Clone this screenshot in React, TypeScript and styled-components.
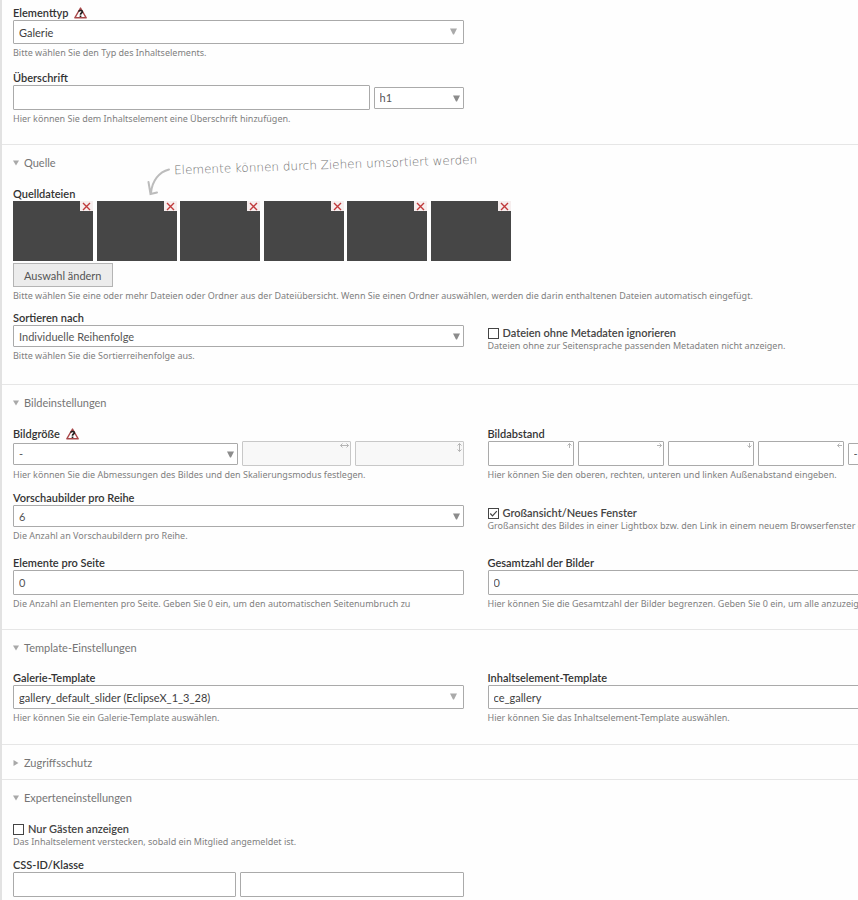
import React, { useId } from "react";
import styled, { createGlobalStyle } from "styled-components";

const GlobalStyle = createGlobalStyle`
  * { box-sizing: border-box; }
  body {
    margin: 0;
    background: #fefefe;
    color: #3d3d3d;
    font-family: Lato, "Noto Sans", sans-serif;
    font-size: 11px;
  }
  input, select, button { font: inherit; color: inherit; margin: 0; }
`;

const Page = styled.main`
  min-height: 100vh;
  border-left: 2px solid #e2e2e2;
  overflow: hidden;
`;

const Form = styled.form`
  min-width: 936px;
  padding-top: 7px;
`;

const Panel = styled.fieldset<{ $first?: boolean; $closed?: boolean }>`
  margin: 0;
  min-width: 0;
  border: 0;
  border-top: ${(p) => (p.$first ? "0" : "1px solid #e6e6e6")};
  padding: 0 0 ${(p) => (p.$closed ? 8 : 7)}px 11px;
`;

const PanelHeader = styled.button`
  display: flex;
  align-items: center;
  gap: 5px;
  margin-top: 10px;
  padding: 0;
  border: 0;
  background: none;
  color: #757575;
  line-height: 16px;
`;

const PanelBody = styled.div<{ $compact?: boolean }>`
  padding-top: ${(p) => (p.$compact ? 16 : 17)}px;
`;

const Row = styled.div<{ $height?: number }>`
  display: grid;
  grid-template-columns: 1fr 1fr;
  column-gap: 24px;
  min-height: ${(p) => p.$height ?? 65}px;
  align-items: start;
`;

const WideRow = styled.div`
  padding-bottom: 10px;
`;

const Field = styled.div`
  min-width: 0;
`;

const CheckField = styled.div<{ $flush?: boolean }>`
  padding-top: ${(p) => (p.$flush ? 0 : 14)}px;
`;

const Label = styled.label`
  display: flex;
  align-items: center;
  gap: 6px;
  height: 13px;
  padding-bottom: 1px;
  line-height: 12px;
  font-weight: 600;
  color: #333;
`;

const Help = styled.p<{ $tight?: boolean }>`
  margin: ${(p) => (p.$tight ? 0 : 3)}px 0 0;
  font-family: "Noto Sans", "Open Sans", sans-serif;
  font-size: 9px;
  line-height: 12px;
  color: #808080;
  white-space: nowrap;
`;

const Line = styled.div<{ $columns: string }>`
  display: grid;
  grid-template-columns: ${(p) => p.$columns};
  column-gap: 4px;
  align-items: center;
`;

const TextBox = styled.input`
  display: block;
  width: 100%;
  min-width: 0;
  height: 25px;
  padding: 0 5px;
  border: 1px solid #aaa;
  border-radius: 1px;
  background: #fff;
  color: #555;
  &:disabled { background: #f8f8f8; border-color: #c8c8c8; }
`;

const SelectWrap = styled.div<{ $tall?: boolean }>`
  position: relative;
  select {
    display: block;
    appearance: none;
    width: 100%;
    height: ${(p) => (p.$tall ? 24 : 22)}px;
    padding: 0 16px 0 5px;
    border: 1px solid #aaa;
    border-radius: 1px;
    background: #fff;
    color: ${(p) => (p.$tall ? "#3d3d3d" : "#555")};
  }
  svg {
    position: absolute;
    right: ${(p) => (p.$tall ? 7 : 4)}px;
    top: 8px;
    pointer-events: none;
    color: ${(p) => (p.$tall ? "#aaa" : "#8c8c8c")};
  }
`;

const BoxWrap = styled.div`
  position: relative;
  svg {
    position: absolute;
    top: 2px;
    right: 2px;
    color: #b5b5b5;
    pointer-events: none;
  }
`;

const CheckLabel = styled.label`
  display: flex;
  align-items: center;
  gap: 4px;
  line-height: 14px;
  font-weight: 600;
  color: #444;
`;

const CheckBox = styled.span`
  position: relative;
  display: flex;
  input {
    appearance: none;
    width: 11px;
    height: 11px;
    border: 1px solid #444;
    background: #fff;
  }
  svg { position: absolute; inset: 0; pointer-events: none; }
`;

const Thumbs = styled.ul`
  display: grid;
  grid-template-columns: repeat(6, 80px);
  justify-content: space-between;
  width: 498px;
  margin: 0;
  padding: 0;
  list-style: none;
`;

const Thumb = styled.li`
  display: flex;
  justify-content: flex-end;
  align-items: flex-start;
  height: 60px;
  background: #464646;
`;

const RemoveButton = styled.button`
  display: flex;
  justify-content: center;
  align-items: flex-end;
  width: 13px;
  height: 10px;
  padding: 0;
  border: 0;
  background: #f6eeee;
`;

const ChangeButton = styled.button`
  display: block;
  height: 24px;
  margin-top: 2px;
  padding: 0 10px;
  border: 1px solid #b4b4b4;
  background: #ececec;
  color: #555;
`;

const SourceArea = styled.div`
  position: relative;
`;

const Hint = styled.div`
  position: absolute;
  left: 134px;
  top: -38px;
  display: flex;
  align-items: flex-start;
  gap: 2px;
  color: #707070;
`;

const HintArrow = styled.svg`
  margin-top: 18px;
`;

const HintText = styled.span`
  margin-top: 7px;
  font-family: "DejaVu Sans", sans-serif;
  font-weight: 200;
  font-size: 12px;
  line-height: 16px;
  white-space: nowrap;
  transform: rotate(-2deg);
`;

const Triangle = ({ right }: { right?: boolean }) => (
  <svg width="6" height="6" viewBox="0 0 6 6" fill="#a8a8a8" aria-hidden="true">
    <path d={right ? "M0.5 0L5.5 3L0.5 6Z" : "M0 0.5H6L3 5.5Z"} />
  </svg>
);

const WarnIcon = () => (
  <svg width="13" height="12" viewBox="0 0 13 12" fill="none" aria-hidden="true">
    <path d="M6.5 1L12.2 10.8H0.8Z" fill="#fff" stroke="#a8484a" strokeWidth="1.4" strokeLinejoin="round" />
    <path d="M4.7 4.7C5 3 8.6 3.1 8.3 5C8.1 6.2 6.5 6 6.5 7.7M6.5 8.5V10" stroke="#222" strokeWidth="1.7" />
  </svg>
);

const arrows = {
  h: { w: 9, h: 5, d: "M0.5 2.5H8.5M2.5 0.5L0.5 2.5L2.5 4.5M6.5 0.5L8.5 2.5L6.5 4.5" },
  v: { w: 5, h: 9, d: "M2.5 0.5V8.5M0.5 2.5L2.5 0.5L4.5 2.5M0.5 6.5L2.5 8.5L4.5 6.5" },
  up: { w: 5, h: 5, d: "M2.5 0.5V5M0.5 2.5L2.5 0.5L4.5 2.5" },
  right: { w: 5, h: 5, d: "M0 2.5H4.5M2.5 0.5L4.5 2.5L2.5 4.5" },
  down: { w: 5, h: 5, d: "M2.5 0V4.5M0.5 2.5L2.5 4.5L4.5 2.5" },
  left: { w: 5, h: 5, d: "M5 2.5H0.5M2.5 0.5L0.5 2.5L2.5 4.5" },
};

type ArrowKind = keyof typeof arrows;

const ArrowBox = ({ kind, name, id, disabled }: { kind: ArrowKind; name: string; id?: string; disabled?: boolean }) => {
  const a = arrows[kind];
  return (
    <BoxWrap>
      <TextBox id={id} aria-label={name} disabled={disabled} />
      <svg width={a.w} height={a.h} viewBox={`0 0 ${a.w} ${a.h}`} fill="none" stroke="currentColor" aria-hidden="true">
        <path d={a.d} />
      </svg>
    </BoxWrap>
  );
};

const Select = ({ id, value, tall, name }: { id?: string; value: string; tall?: boolean; name?: string }) => (
  <SelectWrap $tall={tall}>
    <select id={id} aria-label={name}>
      <option>{value}</option>
    </select>
    <svg width="7" height="7" viewBox="0 0 7 7" fill="currentColor" aria-hidden="true">
      <path d="M0 0.5H7L4 6.5H3Z" />
    </svg>
  </SelectWrap>
);

type FieldProps = {
  label: string;
  help: string;
  warn?: boolean;
  children: (id: string) => React.ReactNode;
};

const LabeledField = ({ label, help, warn, children }: FieldProps) => {
  const id = useId();
  return (
    <Field>
      <Label htmlFor={id}>
        {label}
        {warn && <WarnIcon />}
      </Label>
      {children(id)}
      <Help>{help}</Help>
    </Field>
  );
};

const Check = ({ label, help, checked, flush }: { label: string; help: string; checked?: boolean; flush?: boolean }) => (
  <CheckField $flush={flush}>
    <CheckLabel>
      <CheckBox>
        <input type="checkbox" defaultChecked={checked} />
        {checked && (
          <svg width="11" height="11" viewBox="0 0 11 11" fill="none" stroke="#444" strokeWidth="1.2" aria-hidden="true">
            <path d="M2.3 5.5L4.5 7.8L8.8 3.2" />
          </svg>
        )}
      </CheckBox>
      {label}
    </CheckLabel>
    <Help $tight>{help}</Help>
  </CheckField>
);

const Section = ({ title, compact, children }: { title: string; compact?: boolean; children?: React.ReactNode }) => (
  <Panel $closed={!children}>
    <PanelHeader type="button" aria-expanded={Boolean(children)}>
      <Triangle right={!children} />
      {title}
    </PanelHeader>
    {children && <PanelBody $compact={compact}>{children}</PanelBody>}
  </Panel>
);

const files = ["1", "2", "3", "4", "5", "6"];

export default function App() {
  return (
    <Page>
      <GlobalStyle />
      <Form>
        <Panel $first>
          <Row>
            <LabeledField label="Elementtyp" warn help="Bitte wählen Sie den Typ des Inhaltselements.">
              {(id) => <Select id={id} value="Galerie" tall />}
            </LabeledField>
          </Row>
          <Row>
            <LabeledField label="Überschrift" help="Hier können Sie dem Inhaltselement eine Überschrift hinzufügen.">
              {(id) => (
                <Line $columns="1fr 90px">
                  <TextBox id={id} />
                  <Select name="Ebene" value="h1" />
                </Line>
              )}
            </LabeledField>
          </Row>
        </Panel>

        <Section title="Quelle">
          <WideRow>
            <SourceArea>
              <Hint>
                <HintArrow width="25" height="28" viewBox="0 0 25 28" fill="none" stroke="#bcbcbc" strokeWidth="2" strokeLinecap="round" aria-hidden="true">
                  <path d="M22 1.500C12 4 5 13 4 25M1.500 14L3.500 26L10 24.500" />
                </HintArrow>
                <HintText>Elemente können durch Ziehen umsortiert werden</HintText>
              </Hint>
              <Label as="div">Quelldateien</Label>
              <Thumbs>
                {files.map((file) => (
                  <Thumb key={file}>
                    <RemoveButton type="button" aria-label="Entfernen">
                      <svg width="9" height="9" viewBox="0 0 9 9" fill="none" stroke="#c0393b" strokeWidth="1.4" aria-hidden="true">
                        <path d="M1 1L8 8M8 1L1 8" />
                      </svg>
                    </RemoveButton>
                  </Thumb>
                ))}
              </Thumbs>
            </SourceArea>
            <ChangeButton type="button">Auswahl ändern</ChangeButton>
            <Help>
              Bitte wählen Sie eine oder mehr Dateien oder Ordner aus der Dateiübersicht. Wenn Sie einen Ordner auswählen,
              werden die darin enthaltenen Dateien automatisch eingefügt.
            </Help>
          </WideRow>
          <Row>
            <LabeledField label="Sortieren nach" help="Bitte wählen Sie die Sortierreihenfolge aus.">
              {(id) => <Select id={id} value="Individuelle Reihenfolge" />}
            </LabeledField>
            <Check
              label="Dateien ohne Metadaten ignorieren"
              help="Dateien ohne zur Seitensprache passenden Metadaten nicht anzeigen."
            />
          </Row>
        </Section>

        <Section title="Bildeinstellungen">
          <Row $height={64}>
            <LabeledField
              label="Bildgröße"
              warn
              help="Hier können Sie die Abmessungen des Bildes und den Skalierungsmodus festlegen."
            >
              {(id) => (
                <Line $columns="2fr 109px 109px">
                  <Select id={id} value="-" />
                  <ArrowBox kind="h" name="Breite" disabled />
                  <ArrowBox kind="v" name="Höhe" disabled />
                </Line>
              )}
            </LabeledField>
            <LabeledField
              label="Bildabstand"
              help="Hier können Sie den oberen, rechten, unteren und linken Außenabstand eingeben."
            >
              {(id) => (
                <Line $columns="repeat(4, 86px) 1fr">
                  <ArrowBox id={id} kind="up" name="Oben" />
                  <ArrowBox kind="right" name="Rechts" />
                  <ArrowBox kind="down" name="Unten" />
                  <ArrowBox kind="left" name="Links" />
                  <Select name="Einheit" value="-" />
                </Line>
              )}
            </LabeledField>
          </Row>
          <Row>
            <LabeledField label="Vorschaubilder pro Reihe" help="Die Anzahl an Vorschaubildern pro Reihe.">
              {(id) => <Select id={id} value="6" />}
            </LabeledField>
            <Check
              checked
              label="Großansicht/Neues Fenster"
              help="Großansicht des Bildes in einer Lightbox bzw. den Link in einem neuem Browserfenster öffnen."
            />
          </Row>
          <Row>
            <LabeledField
              label="Elemente pro Seite"
              help="Die Anzahl an Elementen pro Seite. Geben Sie 0 ein, um den automatischen Seitenumbruch zu"
            >
              {(id) => <TextBox id={id} defaultValue="0" />}
            </LabeledField>
            <LabeledField
              label="Gesamtzahl der Bilder"
              help="Hier können Sie die Gesamtzahl der Bilder begrenzen. Geben Sie 0 ein, um alle anzuzeigen."
            >
              {(id) => <TextBox id={id} defaultValue="0" />}
            </LabeledField>
          </Row>
        </Section>

        <Section title="Template-Einstellungen" compact>
          <Row>
            <LabeledField label="Galerie-Template" help="Hier können Sie ein Galerie-Template auswählen.">
              {(id) => <Select id={id} value="gallery_default_slider (EclipseX_1_3_28)" tall />}
            </LabeledField>
            <LabeledField label="Inhaltselement-Template" help="Hier können Sie das Inhaltselement-Template auswählen.">
              {(id) => <Select id={id} value="ce_gallery" tall />}
            </LabeledField>
          </Row>
        </Section>

        <Section title="Zugriffsschutz" />

        <Section title="Experteneinstellungen" compact>
          <Row $height={37}>
            <Check
              flush
              label="Nur Gästen anzeigen"
              help="Das Inhaltselement verstecken, sobald ein Mitglied angemeldet ist."
            />
          </Row>
          <Row $height={38}>
            <Field>
              <Label htmlFor="css-id">CSS-ID/Klasse</Label>
              <Line $columns="1fr 1fr">
                <TextBox id="css-id" />
                <TextBox aria-label="CSS-Klasse" />
              </Line>
            </Field>
          </Row>
        </Section>
      </Form>
    </Page>
  );
}
